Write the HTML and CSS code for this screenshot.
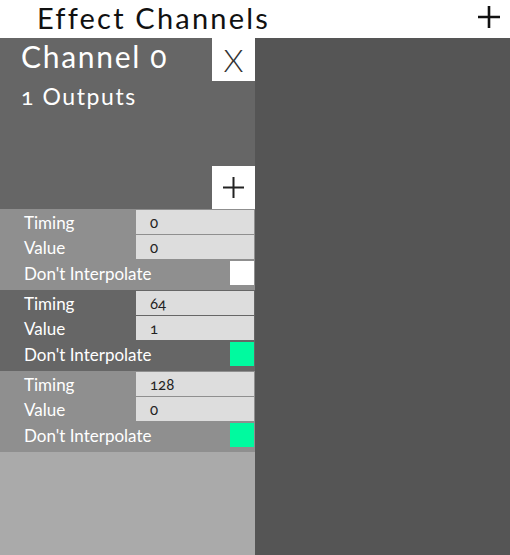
FILE: index.html
```html
<!DOCTYPE html>
<html lang="en">
<head>
    <meta charset="UTF-8">
    <meta name="viewport" content="width=device-width, initial-scale=1.0">
    <title>Effect Channels</title>
    <link rel="stylesheet" href="styles.css">
</head>
<body>
    <div class="topbar">
        <div class="title">Effect Channels</div>
        <div class="add-channel">
            <svg width="22" height="22" viewBox="0 0 22 22"><path d="M11 0v22M0 11h22" stroke="#111" stroke-width="2.6"/></svg>
        </div>
    </div>

    <div class="main">
        <div class="panel">
            <div class="channel-head">
                <div class="channel-info">
                    <div class="channel-name">Channel 0</div>
                    <div class="channel-outputs">1 Outputs</div>
                </div>
                <div class="btn btn-close">X</div>
                <div class="btn btn-add">
                    <svg width="21" height="21" viewBox="0 0 21 21"><path d="M10.5 0v21M0 10.5h21" stroke="#222" stroke-width="2"/></svg>
                </div>
            </div>

            <div class="keyframe light">
                <div class="row"><span>Timing</span><div class="field">0</div></div>
                <div class="row"><span>Value</span><div class="field">0</div></div>
                <div class="row row-check"><span>Don't Interpolate</span><div class="check"></div></div>
            </div>
            <div class="keyframe dark">
                <div class="row"><span>Timing</span><div class="field">64</div></div>
                <div class="row"><span>Value</span><div class="field">1</div></div>
                <div class="row row-check"><span>Don't Interpolate</span><div class="check on"></div></div>
            </div>
            <div class="keyframe light">
                <div class="row"><span>Timing</span><div class="field">128</div></div>
                <div class="row"><span>Value</span><div class="field">0</div></div>
                <div class="row row-check"><span>Don't Interpolate</span><div class="check on"></div></div>
            </div>
        </div>
        <div class="canvas"></div>
    </div>
</body>
</html>
```

FILE: styles.css
```css
body {
    margin: 0;
    font-family: Lato, "Open Sans", sans-serif;
    font-variant-numeric: oldstyle-nums;
    height: 555px;
    display: flex;
    flex-direction: column;
    overflow: hidden;
}
.topbar {
    height: 38px;
    background: #fff;
    display: flex;
    align-items: center;
    justify-content: space-between;
    padding: 0 10px 0 37px;
}
.title {
    font-size: 29px;
    color: #111;
    letter-spacing: 2.2px;
    margin-top: -4px;
}
.add-channel {
    display: flex;
    margin-top: -5px;
}
.main {
    flex: 1;
    display: flex;
}
.panel {
    width: 255px;
    background: #aaa;
}
.canvas {
    flex: 1;
    background: #555;
}
.channel-head {
    height: 171px;
    background: #666;
    display: grid;
    grid-template-columns: 1fr 43px;
    grid-template-rows: 43px 1fr 43px;
}
.channel-info {
    grid-row: 1 / 3;
    padding: 0 0 0 21px;
    color: #fff;
}
.channel-name {
    font-size: 30px;
    line-height: 36px;
    letter-spacing: 1.7px;
}
.channel-outputs {
    font-size: 23px;
    line-height: 30px;
    margin-top: 7px;
    letter-spacing: 1.6px;
}
.btn {
    background: #fff;
    display: flex;
    align-items: center;
    justify-content: center;
    color: #333;
}
.btn-close {
    grid-column: 2;
    grid-row: 1;
    font-size: 32px;
    font-weight: 300;
}
.btn-add {
    grid-column: 2;
    grid-row: 3;
}
.keyframe {
    padding: 1px 1px 5px 0;
    color: #fff;
}
.keyframe.light {
    background: #8f8f8f;
}
.keyframe.dark {
    background: #666;
}
.row {
    height: 24px;
    display: flex;
    align-items: center;
    justify-content: space-between;
    padding-left: 24px;
    font-size: 17px;
    margin-bottom: 1px;
}
.row-check {
    margin: 2px 0 0;
}
.field {
    width: 104px;
    height: 24px;
    line-height: 24px;
    padding-left: 14px;
    background: #ddd;
    color: #222;
    font-size: 15px;
}
.check {
    width: 24px;
    height: 24px;
    background: #fff;
}
.check.on {
    background: #00fa9f;
}
```
